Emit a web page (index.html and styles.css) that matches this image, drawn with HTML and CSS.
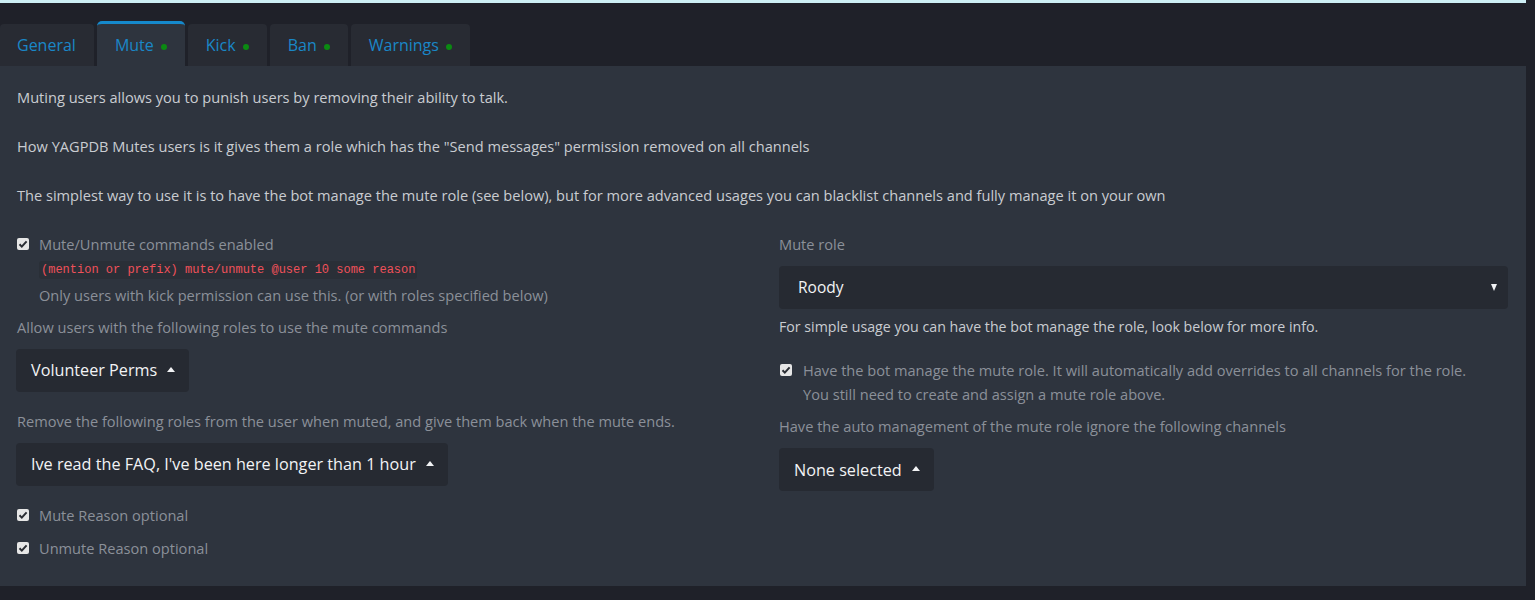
FILE: index.html
```html
<!DOCTYPE html>
<html>
<head>
<meta charset="utf-8">
<link rel="stylesheet" href="styles.css">
</head>
<body>
<div class="topline"></div>
<div class="page">
  <nav class="tabs">
    <a class="tab first">General</a>
    <a class="tab active">Mute <span class="dot"></span></a>
    <a class="tab">Kick <span class="dot"></span></a>
    <a class="tab">Ban <span class="dot"></span></a>
    <a class="tab">Warnings <span class="dot"></span></a>
  </nav>
  <section class="panel">
    <p class="intro">Muting users allows you to punish users by removing their ability to talk.</p>
    <p class="intro">How YAGPDB Mutes users is it gives them a role which has the "Send messages" permission removed on all channels</p>
    <p class="intro">The simplest way to use it is to have the bot manage the mute role (see below), but for more advanced usages you can blacklist channels and fully manage it on your own</p>
    <div class="cols">
      <div class="col left">
        <div class="check">
          <span class="box"><svg viewBox="0 0 12 12" width="12" height="12"><path d="M2.5 6.3 L4.8 8.6 L9.6 3.4" fill="none" stroke="#2a2d33" stroke-width="2"/></svg></span>
          <div>
            <div class="label">Mute/Unmute commands enabled</div>
            <div class="code-line"><code>(mention or prefix) mute/unmute @user 10 some reason</code></div>
            <div class="label help-grey">Only users with kick permission can use this. (or with roles specified below)</div>
          </div>
        </div>
        <div class="label field-label m11">Allow users with the following roles to use the mute commands</div>
        <div class="btn">Volunteer Perms <span class="caret"></span></div>
        <div class="label field-label m19">Remove the following roles from the user when muted, and give them back when the mute ends.</div>
        <div class="btn">Ive read the FAQ, I've been here longer than 1 hour <span class="caret"></span></div>
        <div class="check m19">
          <span class="box"><svg viewBox="0 0 12 12" width="12" height="12"><path d="M2.5 6.3 L4.8 8.6 L9.6 3.4" fill="none" stroke="#2a2d33" stroke-width="2"/></svg></span>
          <div class="label">Mute Reason optional</div>
        </div>
        <div class="check m12">
          <span class="box"><svg viewBox="0 0 12 12" width="12" height="12"><path d="M2.5 6.3 L4.8 8.6 L9.6 3.4" fill="none" stroke="#2a2d33" stroke-width="2"/></svg></span>
          <div class="label">Unmute Reason optional</div>
        </div>
      </div>
      <div class="col right">
        <div class="label">Mute role</div>
        <div class="select">Roody <span class="down"></span></div>
        <div class="help">For simple usage you can have the bot manage the role, look below for more info.</div>
        <div class="check tall">
          <span class="box"><svg viewBox="0 0 12 12" width="12" height="12"><path d="M2.5 6.3 L4.8 8.6 L9.6 3.4" fill="none" stroke="#2a2d33" stroke-width="2"/></svg></span>
          <div class="label">Have the bot manage the mute role. It will automatically add overrides to all channels for the role.<br>You still need to create and assign a mute role above.</div>
        </div>
        <div class="label field-label m10">Have the auto management of the mute role ignore the following channels</div>
        <div class="btn">None selected <span class="caret"></span></div>
      </div>
    </div>
  </section>
</div>
</body>
</html>
```

FILE: styles.css
```css
* { box-sizing: border-box; }
html, body {
  margin: 0;
  padding: 0;
  background: #1f2129;
  font-family: "Open Sans", "Liberation Sans", sans-serif;
  font-size: 14.6px;
  color: #c8cbd0;
}
.topline {
  height: 3px;
  width: 1526px;
  background: #cdeff4;
}
.page {
  width: 1526px;
  padding-top: 18px;
}
.tabs {
  display: flex;
  gap: 3px;
  align-items: flex-end;
  height: 45px;
}
.tab {
  display: flex;
  align-items: center;
  height: 42px;
  padding: 0 18px 0 18px;
  background: #282b33;
  color: #1a87c7;
  font-size: 16px;
  border-radius: 4px 4px 0 0;
  text-decoration: none;
}
.tab.first {
  padding: 0 18px 0 17px;
}
.tab.active {
  height: 45px;
  background: #2e343e;
  border-top: 3px solid #1589cc;
  padding: 0 18px 0 18px;
  border-radius: 5px 5px 0 0;
}
.dot {
  display: inline-block;
  width: 6px;
  height: 6px;
  border-radius: 50%;
  background: #0b8a12;
  margin-left: 7px;
  margin-top: 3px;
}
.panel {
  background: #2e343e;
  padding: 21px 17px 27px 17px;
}
.intro {
  margin: 0 0 28px 0;
  line-height: 21px;
  color: #c9ccd1;
}
.cols {
  display: grid;
  grid-template-columns: 729px 729px;
  column-gap: 33px;
}
.col {
  display: flex;
  flex-direction: column;
  align-items: flex-start;
}
.label {
  line-height: 21px;
  color: #8b9099;
  white-space: nowrap;
}
.check {
  display: flex;
  align-items: flex-start;
  gap: 10px;
}
.check .box {
  width: 12px;
  height: 12px;
  margin-top: 4px;
  background: #e6e6e6;
  border-radius: 2px;
  display: flex;
  flex: none;
}
.check.tall .label { line-height: 24px; }
.check.tall .box { margin-top: 6px; }
.check.tall { gap: 11px; padding-left: 1px; margin-top: 21px; }
.code-line {
  margin-top: 6px;
  height: 18px;
  display: flex;
  align-items: center;
}
.code-line code {
  font-family: "Liberation Mono", "DejaVu Sans Mono", monospace;
  font-size: 12px;
  color: #f0515a;
  background: #2a2f37;
  padding: 1px 2px;
  border-radius: 3px;
  line-height: 16px;
}
.help-grey { margin-top: 6px; }
.m10 { margin-top: 9.5px; }
.m11 { margin-top: 11px; }
.m12 { margin-top: 12px; }
.m19 { margin-top: 19.5px; }
.btn {
  margin-top: 10.5px;
  height: 43px;
  display: flex;
  align-items: center;
  padding: 0 14px 0 15px;
  background: #262a32;
  border-radius: 4px;
  color: #f2f3f5;
  font-size: 16.2px;
  font-weight: 500;
  white-space: nowrap;
}
.left .btn { margin-left: -1px; }
.right .btn { margin-top: 11.5px; }
.caret {
  display: inline-block;
  width: 0;
  height: 0;
  border-left: 4.5px solid transparent;
  border-right: 4.5px solid transparent;
  border-bottom: 5px solid #f2f3f5;
  margin-left: 10px;
  margin-bottom: 2px;
}
.select {
  margin-top: 10.5px;
  width: 729px;
  height: 43px;
  display: flex;
  align-items: center;
  justify-content: space-between;
  padding: 0 11px 0 19px;
  background: #262a32;
  border-radius: 4px;
  color: #f2f3f5;
  font-size: 15.5px;
  font-weight: 500;
}
.down {
  width: 0;
  height: 0;
  border-left: 3.5px solid transparent;
  border-right: 3.5px solid transparent;
  border-top: 7px solid #f2f3f5;
}
.help {
  margin-top: 7.5px;
  line-height: 21px;
  font-size: 14.2px;
  color: #c9ccd1;
}
```
